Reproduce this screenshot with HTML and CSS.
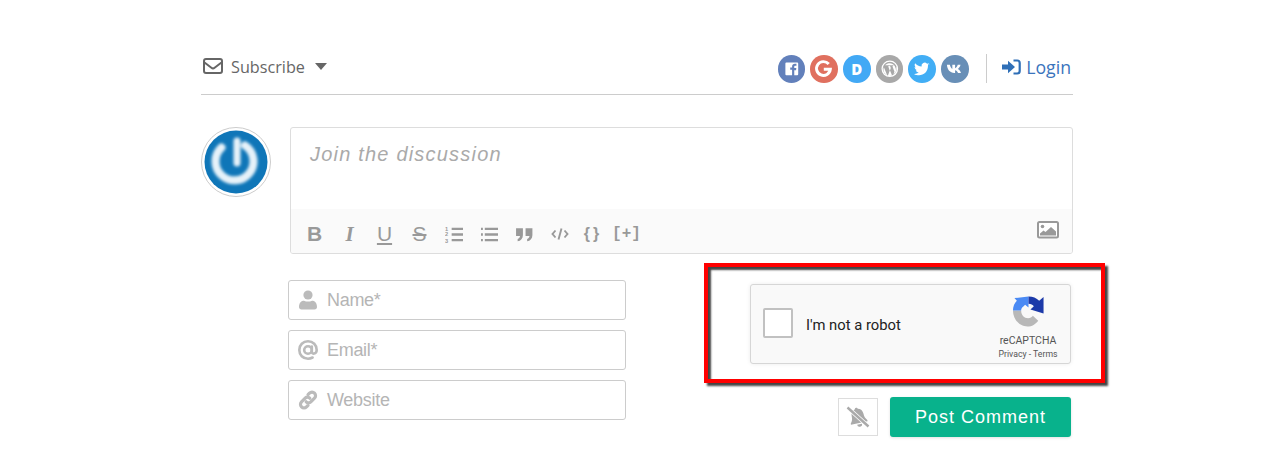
FILE: index.html
```html
<!DOCTYPE html>
<html lang="en">
<head>
<meta charset="utf-8">
<title>Join the discussion</title>
<link rel="stylesheet" href="styles.css">
</head>
<body>
<div class="comments">
  <header class="head">
    <div class="subscribe">
      <svg class="mail" viewBox="0 0 20 16"><rect x="1" y="1" width="18" height="14" rx="2" fill="none" stroke="#666" stroke-width="2"/><path d="M1.500 4.500 8.400 9.800c1 .8 2.200.8 3.200 0L18.500 4.500" fill="none" stroke="#666" stroke-width="2"/></svg>
      <span class="sub-label">Subscribe</span>
      <span class="caret"></span>
    </div>
    <div class="head-right">
      <div class="socials">
        <span class="soc fb"><svg viewBox="0 0 28 28"><path fill="#fff" d="M8.500 7.500h11a1 1 0 0 1 1 1v11a1 1 0 0 1-1 1h-3v-5h1.800l.3-2.200h-2.100v-1.300c0-.7.200-1.100 1.100-1.100h1.100V8.900c-.5-.1-1-.1-1.600-.1-1.700 0-2.800 1-2.800 2.900v1.100h-1.900V15h1.900v5.500H8.500a1 1 0 0 1-1-1v-11a1 1 0 0 1 1-1z"/></svg></span>
        <span class="soc gg"><svg viewBox="0 0 28 28"><path fill="none" stroke="#fff" stroke-width="3" d="M19 9.200A7 7 0 1 0 20.600 14.500H14"/></svg></span>
        <span class="soc ds"><span class="soc-d">D</span></span>
        <span class="soc wp"><svg viewBox="0 0 28 28"><circle cx="14" cy="14" r="7.800" fill="none" stroke="#fff" stroke-width="1.300"/><path fill="#fff" d="M9.200 10.500h4.200v.7l-1 .1 1.600 4.900 1-3.100-.6-1.800-.8-.1v-.7h4v.7l-.9.1 2 5.700.7-2.300c.6-2 .1-3-.6-3.800-1.600-2.600-5.600-3.800-8.700-1.200l-.9.7zM8 12.500l3.300 8c-3.300-1.900-4.600-4.800-3.300-8zM14.100 15.400l2.200 5.500c-1.400.6-3 .6-4.300.1zM20.600 11.700c.8 3 .1 5.600-2.900 8.200z"/></svg></span>
        <span class="soc tw"><svg viewBox="0 0 28 28"><path fill="#fff" d="M21.800 9.300c-.6.300-1.200.4-1.900.5.700-.4 1.200-1 1.400-1.800-.6.400-1.300.6-2 .8a3.200 3.200 0 0 0-5.500 2.900c-2.700-.1-5-1.400-6.600-3.300-.9 1.500-.4 3.400 1 4.300-.5 0-1-.2-1.500-.4 0 1.500 1.100 2.900 2.600 3.200-.5.100-1 .1-1.400.1.400 1.300 1.600 2.200 3 2.200-1.400 1.100-3.100 1.600-4.800 1.400 5.900 3.600 14.400.4 14.200-8.700.6-.4 1.100-.9 1.500-1.500z"/></svg></span>
        <span class="soc vk"><svg viewBox="0 0 28 28"><path fill="#fff" d="M6 10h3c.3 1.600 1.300 3.800 2.500 4.300V10h2.800v3.500c1.100-.2 2.200-1.800 2.700-3.500h2.800c-.4 2-1.700 3.600-2.700 4.300 1.100.6 2.500 1.800 3.200 3.900h-3c-.6-1.500-1.800-2.700-3-2.800v2.800h-.8C9.200 18.200 6.300 15 6 10z"/></svg></span>
      </div>
      <span class="divider"></span>
      <a class="login">
        <svg class="login-icon" viewBox="0 0 19 16"><path fill="#2f6fb7" d="M0 5.500h6V1.800L13 8l-7 6.200v-3.700H0z"/><path fill="none" stroke="#2f6fb7" stroke-width="2.200" d="M11.500 1.500h3.700a2.500 2.500 0 0 1 2.500 2.500v8a2.500 2.500 0 0 1-2.500 2.500h-3.700"/></svg>
        <span class="login-label">Login</span>
      </a>
    </div>
  </header>

  <section class="composer">
    <div class="avatar">
      <svg viewBox="0 0 70 70" width="70" height="70">
        <defs><filter id="soft" x="-20%" y="-20%" width="140%" height="140%"><feGaussianBlur stdDeviation="1.700"/></filter></defs>
        <circle cx="35" cy="35" r="34.500" fill="#fff" stroke="#ccc" stroke-width="1"/>
        <circle cx="35" cy="35" r="31.500" fill="#0f76b8"/>
        <g filter="url(#soft)"><path d="M20.500 20.500A19 19 0 1 0 44 18.500" fill="none" stroke="#e6f2f9" stroke-width="8" stroke-linecap="round"/><path d="M36 14v22" stroke="#e6f2f9" stroke-width="7" stroke-linecap="round"/></g>
      </svg>
    </div>
    <div class="editor">
      <div class="editor-text">Join the discussion</div>
      <div class="toolbar">
        <div class="tools">
          <span class="tool t-b">B</span>
          <span class="tool t-i">I</span>
          <span class="tool t-u">U</span>
          <span class="tool t-s">S</span>
          <span class="tool"><svg class="ti" viewBox="0 0 20 18"><path stroke="#999" stroke-width="2.400" d="M7 3h12M7 9h12M7 15h12"/><text class="num" x="0" y="5">1</text><text class="num" x="0" y="11">2</text><text class="num" x="0" y="17.500">3</text></svg></span>
          <span class="tool"><svg class="ti" viewBox="0 0 20 18"><path stroke="#999" stroke-width="2.400" d="M5 3h14M5 9h14M5 15h14"/><path stroke="#999" stroke-width="2.400" d="M1 3h2M1 9h2M1 15h2"/></svg></span>
          <span class="tool"><svg class="ti ti-q" viewBox="0 0 18 14"><path fill="#999" d="M1 1h6.500v6.500C7.500 11 5.500 13 2.500 13.500v-2.300c1.300-.4 2.200-1.300 2.200-2.700H1zM10 1h6.500v6.500c0 3.500-2 5.500-5 6v-2.300c1.300-.4 2.200-1.300 2.200-2.700H10z"/></svg></span>
          <span class="tool"><svg class="ti ti-code" viewBox="0 0 18 12"><path fill="none" stroke="#999" stroke-width="1.900" d="M4.500 2.500 1.500 6l3 3.500M13.500 2.500l3 3.500-3 3.500M10.500 .5 7.500 11.500"/></svg></span>
          <span class="tool t-br">{&#8201;}</span>
          <span class="tool t-plus">[+]</span>
        </div>
        <svg class="img-icon" viewBox="0 0 22 18"><rect x="1" y="1" width="20" height="15.500" rx="1.500" fill="#fff" stroke="#999" stroke-width="2"/><circle cx="5.500" cy="5.500" r="1.800" fill="#999"/><path fill="#999" d="M3 14.500v-2l3.500-3 2 1.500L14 6l5 4.500v4z"/></svg>
      </div>
    </div>
  </section>

  <section class="fields-row">
    <div class="fields">
      <label class="field">
        <svg class="f-ico" viewBox="0 0 20 20"><circle cx="10" cy="5" r="4.600" fill="#bbb"/><path fill="#bbb" d="M1 17c0-4.500 2.500-6.300 5-6.300 2.500 1.200 5.500 1.200 8 0 2.500 0 5 1.800 5 6.300 0 1.600-1 2.500-2.500 2.500h-13C2 19.500 1 18.600 1 17z"/></svg>
        <span class="f-ph">Name*</span>
      </label>
      <label class="field">
        <svg class="f-ico" viewBox="0 0 20 20"><circle cx="10" cy="10" r="3.800" fill="none" stroke="#bbb" stroke-width="2.600"/><path fill="none" stroke="#bbb" stroke-width="2.600" stroke-linecap="round" d="M13.800 6.500v5.200c0 2.800 4.700 2.800 4.900-1.700C18.700 5 15 1.300 10 1.300S1.300 5 1.300 10s3.700 8.700 8.700 8.700c1.800 0 3.200-.4 4.600-1.200"/></svg>
        <span class="f-ph">Email*</span>
      </label>
      <label class="field">
        <svg class="f-ico" viewBox="0 0 20 20"><path fill="none" stroke="#bbb" stroke-width="3.200" stroke-linecap="round" d="M8.200 11.800c1.500 1.500 3.400 1.300 4.600.1l3.700-3.700a3.500 3.500 0 0 0-5-5L10 4.700M11.800 8.200C10.300 6.700 8.400 6.900 7.200 8.100l-3.700 3.700a3.500 3.500 0 0 0 5 5l1.500-1.500"/></svg>
        <span class="f-ph">Website</span>
      </label>
    </div>
    <div class="side">
      <div class="captcha">
        <span class="cb"></span>
        <span class="robot">I'm not a robot</span>
        <div class="brand">
          <svg class="rc" viewBox="0 0 34 34">
            <path fill="#b8b8b8" d="M1 16h8.500c-.3 4.500 3 8 7 8 2.200 0 4-1 5-2.500l5.500 5c-2.500 3.500-6.500 6-11 6C8 32.500 1 25.500 1 16z"/>
            <path fill="#4a8af4" d="M1 16c0-4 1.500-7.500 4-10L2.500 3.200 17 1.500V13l-3.500-3-1.800 1.800c-1.500 1-2.200 2.400-2.300 4.200z"/>
            <path fill="#1c3aa9" d="M17 1.500c4.500 0 8.200 1.500 11 4.500L32.500 2v17L19 15l3.500-3.500C21.500 10 19.500 9 17 9z"/>
          </svg>
          <span class="rc-name">reCAPTCHA</span>
          <span class="rc-links">Privacy - Terms</span>
        </div>
      </div>
      <div class="actions">
        <span class="bell-btn">
          <svg class="bell" viewBox="0 0 24 22"><g transform="rotate(-12 12 11)"><path fill="#aaa" d="M12 1.500c.8 0 1.400.6 1.400 1.300 3 .6 4.600 3 4.600 6 0 3 .6 5 2.500 7v1.400h-17V16c2-2 2.500-4 2.500-7.200 0-3 1.600-5.400 4.600-6 0-.7.600-1.300 1.400-1.300z"/><path fill="#aaa" d="M9.500 18.500h5a2.500 2.500 0 0 1-5 0z"/></g><path stroke="#fff" stroke-width="4" d="M1.500 1.500 22.500 20.500"/><path stroke="#aaa" stroke-width="2.400" d="M1.500 1.500 22.500 20.500"/></svg>
        </span>
        <button class="post" type="button">Post Comment</button>
      </div>
    </div>
  </section>
  <div class="highlight"></div>
</div>
</body>
</html>
```
FILE: styles.css
```css
* { box-sizing: border-box; }
html, body { margin: 0; padding: 0; background: #fff; }
body { height: 476px; overflow: hidden; font-family: "Open Sans", sans-serif; }
.comments { position: relative; width: 872px; margin-left: 201px; padding-top: 52px; }

.head { display: flex; justify-content: space-between; align-items: center; height: 43px; border-bottom: 1px solid #ccc; padding-bottom: 13px; }
.subscribe { display: flex; align-items: center; color: #666; }
.mail { width: 20px; height: 16px; margin: 0 8px 2px 2px; }
.sub-label { font-size: 16.200px; line-height: 22px; }
.caret { width: 0; height: 0; border-left: 6.500px solid transparent; border-right: 6.500px solid transparent; border-top: 7px solid #666; margin: 0 0 1px 10px; }
.head-right { display: flex; align-items: center; padding-right: 2px; }
.socials { display: flex; gap: 5.100px; margin-top: 5px; }
.soc { width: 27.600px; height: 27.600px; border-radius: 50%; display: flex; align-items: center; justify-content: center; }
.soc svg { width: 100%; height: 100%; }
.fb { background: #6280bb; }
.gg { background: #e0705f; }
.ds { background: #42a9f5; }
.wp { background: #a8a8a8; }
.tw { background: #42aef5; }
.vk { background: #688fb7; }
.soc-d { color: #fff; font-family: "Open Sans", sans-serif; font-weight: 800; font-size: 15px; line-height: 1; }
.divider { width: 1px; height: 29px; background: #ccc; margin: 4px 15px 0 17.500px; }
.login { display: flex; align-items: center; color: #3a74bd; }
.login-icon { width: 19px; height: 16px; margin-right: 5px; }
.login-label { font-size: 17.700px; line-height: 24px; }

.composer { display: flex; margin-top: 32px; }
.avatar { width: 70px; height: 70px; margin-right: 19px; flex: none; }
.avatar svg { display: block; }
.editor { flex: 1; height: 127px; border: 1px solid #ddd; border-radius: 3px; display: flex; flex-direction: column; overflow: hidden; }
.editor-text { height: 81px; flex: none; padding: 14px 0 0 19px; font-family: "Liberation Sans", Arial, sans-serif; font-style: italic; font-size: 20px; line-height: 24px; letter-spacing: 1.200px; color: #aaa; }
.toolbar { flex: 1; background: #fafafa; display: flex; justify-content: space-between; padding: 0 13px 0 15px; }
.tools { display: flex; align-items: center; height: 44px; padding-top: 6px; color: #999; }
.tool { width: 35px; display: flex; justify-content: center; align-items: center; font-family: "Liberation Sans", Arial, sans-serif; font-size: 21px; line-height: 20px; color: #999; text-align: center; }
.tools .tool:first-child { width: 17px; margin-right: 9px; }
.t-b { font-weight: 700; }
.t-i { font-family: "Liberation Serif", serif; font-style: italic; font-weight: 700; }
.t-u { text-decoration: underline; text-underline-offset: 2px; }
.t-s { text-decoration: line-through; }
.ti { width: 19px; height: 17px; }
.ti-code { width: 18px; height: 12px; }
.num { font-size: 6px; font-weight: 700; fill: #999; font-family: "Liberation Sans", sans-serif; }
.tools .t-br { width: 29px; font-size: 16px; font-weight: 700; }
.tools .t-plus { width: 41px; font-family: "Liberation Mono", monospace; font-size: 16px; font-weight: 700; }
.img-icon { width: 22px; height: 18px; margin-top: 12px; }

.fields-row { display: flex; margin-top: 26px; padding-left: 87px; padding-right: 2px; justify-content: space-between; }
.fields { width: 338px; display: flex; flex-direction: column; gap: 10px; }
.field { height: 40px; border: 1px solid #ccc; border-radius: 3px; background: #fff; display: flex; align-items: center; padding-left: 9px; }
.f-ico { width: 20px; height: 20px; flex: none; margin-right: 9px; }
.f-ph { font-family: "Liberation Sans", Arial, sans-serif; font-size: 18px; letter-spacing: -.3px; color: #b5b5b5; line-height: 22px; }
.side { width: 321px; padding-top: 4px; }
.captcha { height: 80px; border: 1px solid #d6d6d6; border-radius: 3px; background: #f9f9f9; box-shadow: 0 0 4px rgba(0,0,0,.08); display: flex; align-items: center; padding-left: 12px; position: relative; }
.cb { width: 30px; height: 30px; background: #fff; border: 2px solid #c1c1c1; border-radius: 2px; margin: -2px 13px 0 0; flex: none; }
.robot { font-family: Roboto, sans-serif; font-size: 14.800px; color: #222; margin-top: 2px; }
.brand { margin-left: auto; width: 64px; margin-right: 10px; display: flex; flex-direction: column; align-items: center; font-family: Roboto, sans-serif; color: #555; padding-top: 6px; }
.rc { width: 33px; height: 33px; margin-bottom: 6px; }
.rc-name { font-size: 10.500px; line-height: 14px; white-space: nowrap; }
.rc-links { font-size: 8.700px; line-height: 12px; white-space: nowrap; color: #555; }
.actions { display: flex; justify-content: flex-end; align-items: center; gap: 12px; margin-top: 33px; }
.bell-btn { width: 40px; height: 38px; border: 1px solid #ddd; display: flex; align-items: center; justify-content: center; }
.bell { width: 24px; height: 22px; }
.post { width: 181px; height: 40px; border: 0; border-radius: 3px; background: #08b28c; color: #fff; font-family: "Liberation Sans", Arial, sans-serif; font-size: 18px; letter-spacing: 1px; padding: 0; box-shadow: 0 1px 3px rgba(0,0,0,.12); }

.highlight { position: absolute; left: 503px; top: 263px; width: 401px; height: 120px; border: 4px solid #f00; box-shadow: inset 3px 3px 2px #444, 3px 3px 2px #444; }
```
